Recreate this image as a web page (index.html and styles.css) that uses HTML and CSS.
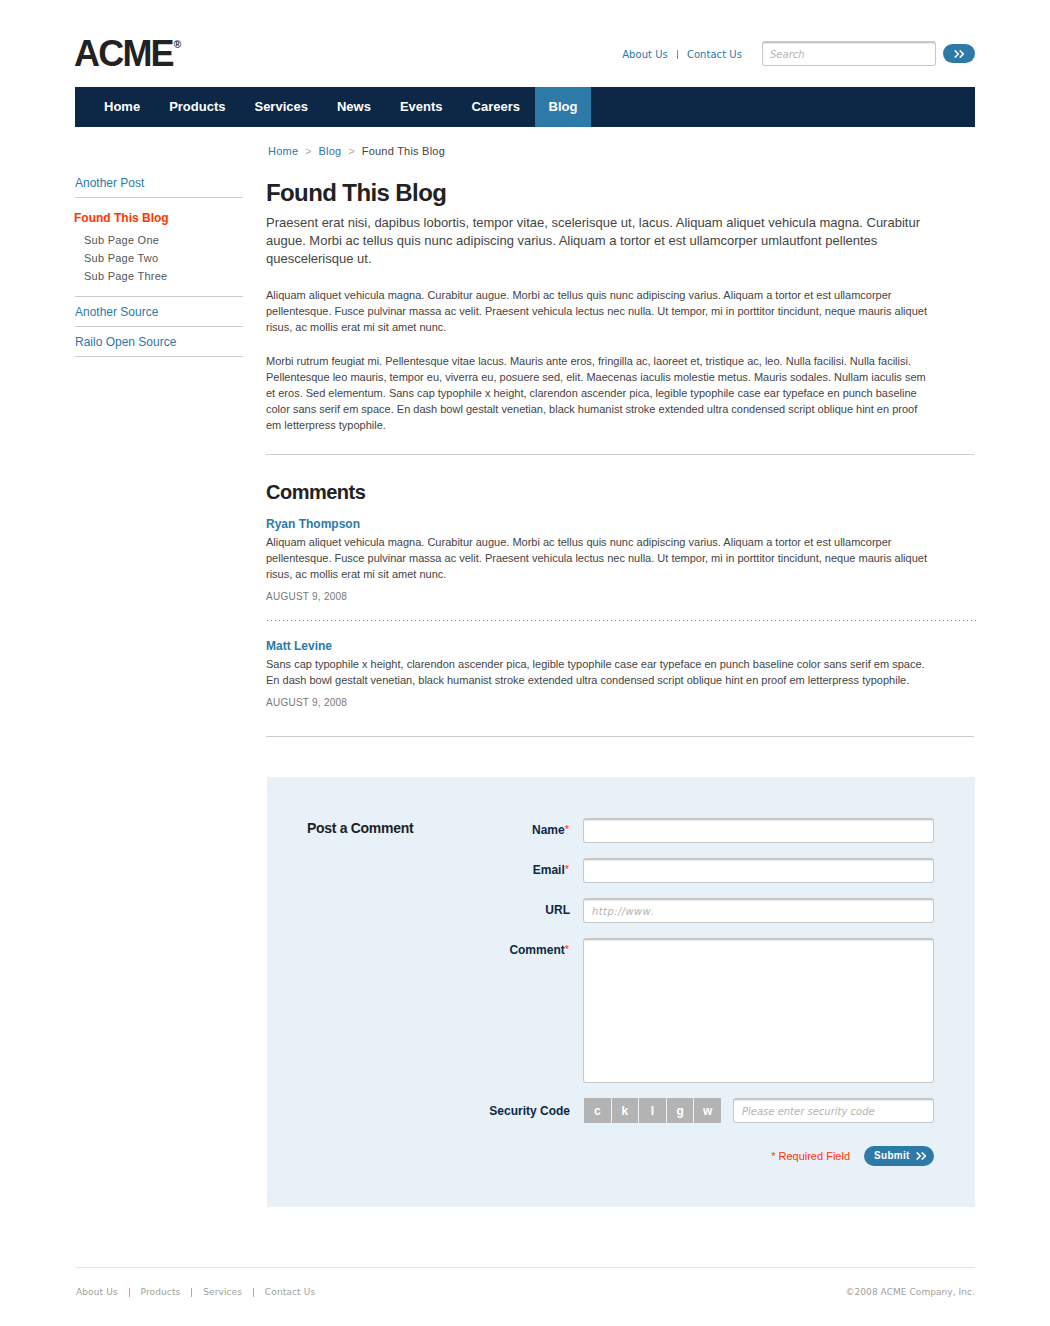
FILE: index.html
```html
<!DOCTYPE html>
<html lang="en">
<head>
<meta charset="utf-8">
<title>Found This Blog - ACME</title>
<link rel="stylesheet" href="styles.css">
</head>
<body>
<div class="page">
  <header class="header">
    <div class="logo"><span class="logo-name">ACME</span><span class="logo-mark">®</span></div>
    <div class="tools">
      <a class="tool-link about">About Us</a><span class="bar"></span><a class="tool-link contact">Contact Us</a>
      <div class="field search"><span class="hint">Search</span></div>
      <button class="pill go" aria-label="Search"><svg width="10" height="8" viewBox="0 0 10 8"><path d="M0.7 0.5L4.2 4L0.7 7.5M5.7 0.5L9.2 4L5.7 7.5"/></svg></button>
    </div>
  </header>
  <nav class="nav">
    <a>Home</a><a>Products</a><a>Services</a><a>News</a><a>Events</a><a>Careers</a><a class="current">Blog</a>
  </nav>
  <div class="columns">
    <aside class="side">
      <a class="side-link first">Another Post</a>
      <div class="side-group">
        <a class="side-current">Found This Blog</a>
        <a class="sub one">Sub Page One</a>
        <a class="sub two">Sub Page Two</a>
        <a class="sub three">Sub Page Three</a>
      </div>
      <a class="side-link source">Another Source</a>
      <a class="side-link railo">Railo Open Source</a>
    </aside>
    <main class="main">
      <div class="crumbs"><a>Home</a><i>&gt;</i><a>Blog</a><i>&gt;</i><span>Found This Blog</span></div>
      <h1>Found This Blog</h1>
      <p class="lead">Praesent erat nisi, dapibus lobortis, tempor vitae, scelerisque ut, lacus. Aliquam aliquet vehicula magna. Curabitur<br>augue. Morbi ac tellus quis nunc adipiscing varius. Aliquam a tortor et est ullamcorper umlautfont pellentes<br>quescelerisque ut.</p>
      <p class="copy">Aliquam aliquet vehicula magna. Curabitur augue. Morbi ac tellus quis nunc adipiscing varius. Aliquam a tortor et est ullamcorper<br>pellentesque. Fusce pulvinar massa ac velit. Praesent vehicula lectus nec nulla. Ut tempor, mi in porttitor tincidunt, neque mauris aliquet<br>risus, ac mollis erat mi sit amet nunc.</p>
      <p class="copy second">Morbi rutrum feugiat mi. Pellentesque vitae lacus. Mauris ante eros, fringilla ac, laoreet et, tristique ac, leo. Nulla facilisi. Nulla facilisi.<br>Pellentesque leo mauris, tempor eu, viverra eu, posuere sed, elit. Maecenas iaculis molestie metus. Mauris sodales. Nullam iaculis sem<br>et eros. Sed elementum. Sans cap typophile x height, clarendon ascender pica, legible typophile case ear typeface en punch baseline<br>color sans serif em space. En dash bowl gestalt venetian, black humanist stroke extended ultra condensed script oblique hint en proof<br>em letterpress typophile.</p>
      <section class="comments">
        <h2>Comments</h2>
        <article class="comment">
          <h3 class="ryan">Ryan Thompson</h3>
          <p class="copy">Aliquam aliquet vehicula magna. Curabitur augue. Morbi ac tellus quis nunc adipiscing varius. Aliquam a tortor et est ullamcorper<br>pellentesque. Fusce pulvinar massa ac velit. Praesent vehicula lectus nec nulla. Ut tempor, mi in porttitor tincidunt, neque mauris aliquet<br>risus, ac mollis erat mi sit amet nunc.</p>
          <div class="date">AUGUST 9, 2008</div>
        </article>
        <div class="dots"></div>
        <article class="comment">
          <h3 class="matt">Matt Levine</h3>
          <p class="copy">Sans cap typophile x height, clarendon ascender pica, legible typophile case ear typeface en punch baseline color sans serif em space.<br>En dash bowl gestalt venetian, black humanist stroke extended ultra condensed script oblique hint en proof em letterpress typophile.</p>
          <div class="date">AUGUST 9, 2008</div>
        </article>
      </section>
      <form class="form">
        <h4>Post a Comment</h4>
        <div class="rows">
          <div class="row"><label>Name<sup>*</sup></label><div class="field"></div></div>
          <div class="row"><label>Email<sup>*</sup></label><div class="field"></div></div>
          <div class="row"><label class="plain">URL</label><div class="field"><span class="hint url">http://www.</span></div></div>
          <div class="row"><label>Comment<sup>*</sup></label><div class="field area"></div></div>
          <div class="row"><label class="plain wide">Security Code</label>
            <div class="code"><b>c</b><b>k</b><b>l</b><b>g</b><b>w</b></div>
            <div class="field security"><span class="hint">Please enter security code</span></div>
          </div>
          <div class="actions"><span class="required">* Required Field</span>
            <button type="button" class="pill submit">Submit<svg width="10" height="8" viewBox="0 0 10 8"><path d="M0.7 0.5L4.2 4L0.7 7.5M5.7 0.5L9.2 4L5.7 7.5"/></svg></button>
          </div>
        </div>
      </form>
    </main>
  </div>
  <footer class="footer">
    <div class="foot-links"><a>About Us</a><span class="bar"></span><a>Products</a><span class="bar"></span><a>Services</a><span class="bar"></span><a>Contact Us</a></div>
    <div class="legal">©2008 ACME Company, Inc.</div>
  </footer>
</div>
</body>
</html>
```
FILE: styles.css
```css
* { box-sizing: border-box; }
body { margin: 0; background: #fff; color: #444; font-family: "Liberation Sans", Arial, sans-serif; font-size: 11px; white-space: nowrap; }
h1, h2, h3, h4, p { margin: 0; }
.page { width: 900px; height: 1326px; margin: 0 auto; }

.header { display: flex; justify-content: space-between; height: 87px; }
.logo { display: flex; padding-top: 33px; margin-left: -1px; color: #222; font-weight: bold; }
.logo-name { font-size: 36px; line-height: 42px; letter-spacing: -1.8px; }
.logo-mark { font-size: 10px; line-height: 12px; padding-top: 6px; margin-left: 1px; }
.tools { display: flex; align-items: flex-start; font-family: "DejaVu Sans", sans-serif; font-size: 10px; color: #2d79a7; }
.tool-link { line-height: 14px; padding-top: 48px; letter-spacing: 0.05px; }
.tools .bar { width: 1px; height: 9px; margin: 50px 9px 0 9px; background: #888; }
.field { height: 25px; border: 1px solid #c8c8c8; border-top-width: 2px; border-radius: 3px; background: #fff; box-shadow: inset 0 1px 1px #e8e8e8; }
.hint { display: block; padding: 4px 0 0 8px; font: italic 10px/16px "DejaVu Sans", sans-serif; color: #b4b4b4; }
.search .hint { padding-left: 7px; }
.url { letter-spacing: 0.4px; }
.search { width: 174px; margin: 41px 7px 0 20px; }
.pill { display: flex; align-items: center; border: 0; background: #2d79a7; color: #fff; border-radius: 10px; }
.pill path { fill: none; stroke: #fff; stroke-width: 1.7; }
.go { width: 32px; height: 19px; margin-top: 44px; padding: 0 0 0 11px; }

.nav { display: flex; height: 40px; padding-left: 14.5px; background: #0d2846; color: #fff; font-weight: bold; font-size: 13px; line-height: 39px; }
.nav a { padding: 0 14.5px; }
.nav .current { margin-left: auto; margin-right: 384px; padding: 0 0 0 13.5px; width: 56px; background: #2d79a7; }

.columns { display: flex; gap: 23px; }
.side { width: 168px; padding-top: 41px; font-size: 12px; color: #2d79a7; }
.side a { display: block; }
.side-link { height: 30px; line-height: 30px; border-bottom: 1px solid #ccc; }
.side-group { height: 99px; padding-top: 11px; border-bottom: 1px solid #ccc; color: #555; font-size: 11px; }
.side .side-current { height: 22px; margin-left: -1px; line-height: 18px; color: #ff3500; font-weight: bold; font-size: 12px; }
.sub { padding-left: 9px; line-height: 18px; letter-spacing: 0.25px; }

.main { width: 709px; }
.crumbs { display: flex; gap: 6.8px; margin-left: 2px; padding-top: 16px; height: 49px; line-height: 16px; color: #444; letter-spacing: 0.23px; }
.crumbs a { color: #2d79a7; }
.crumbs i { font-style: normal; color: #aaa; }
h1 { height: 38px; font-size: 24px; line-height: 34px; letter-spacing: -0.6px; color: #222; }
.lead { font-size: 13px; line-height: 18px; }
.copy { font-size: 11px; line-height: 16px; }
.lead + .copy { margin-top: 19px; }
.second { margin-top: 18px; width: 708px; padding-bottom: 21px; border-bottom: 1px solid #ccc; }
.comments { width: 708px; height: 282px; padding-top: 24px; border-bottom: 1px solid #ccc; }
h2 { height: 36px; font-size: 20px; line-height: 26px; letter-spacing: -0.5px; color: #222; }
h3 { font-size: 12px; line-height: 18px; padding-bottom: 1px; color: #2d79a7; }
.date { margin-top: 7px; font-size: 10px; line-height: 16px; letter-spacing: 0.25px; color: #777; }
.dots { width: 710px; height: 1px; margin: 15px 0 16px 1px; background: repeating-linear-gradient(to right, #888 0 1px, transparent 1px 4px); }

.form { display: flex; width: 708px; height: 430px; margin: 40px 0 0 1px; padding: 41px 41px 0 40px; background: #e8f1f7; }
h4 { width: 170px; font-size: 14px; line-height: 20px; letter-spacing: -0.3px; color: #222; }
.rows { flex: 1; display: flex; flex-direction: column; gap: 15px; }
.row { display: flex; }
.row label { width: 93px; margin-right: 13px; padding-right: 1px; line-height: 24px; text-align: right; font-size: 12px; font-weight: bold; color: #0d2846; }
.row .plain { padding-right: 0; }
.row .wide { line-height: 26px; height: 25px; }
sup { color: #ff3500; font-size: 11px; font-weight: normal; line-height: 1; vertical-align: 1px; }
.row .field { flex: 1; }
.row .area { height: 145px; }
.code { display: flex; gap: 1px; width: 137px; height: 25px; margin: 0 12px 0 1px; }
.code b { flex: 1; background: #b3b3b3; color: #fff; font-size: 12px; line-height: 26px; text-align: center; }
.actions { display: flex; justify-content: flex-end; margin-top: 8px; }
.required { margin-right: 14px; line-height: 20px; color: #ff3500; }
.submit { width: 70px; height: 20px; padding: 0 0 1px 10px; gap: 6px; font: bold 10px "Liberation Sans", Arial, sans-serif; letter-spacing: 0.3px; }

.footer { display: flex; justify-content: space-between; margin-top: 60px; padding: 17px 0 0 1px; border-top: 1px solid #e6e6e6; font: 9px/14px "DejaVu Sans", sans-serif; letter-spacing: 0.06px; color: #a0a0a0; }
.foot-links { display: flex; letter-spacing: 0.12px; }
.footer .bar { width: 1px; height: 9px; margin: 3px 11px 0 10.8px; background: #aaa; }
```
